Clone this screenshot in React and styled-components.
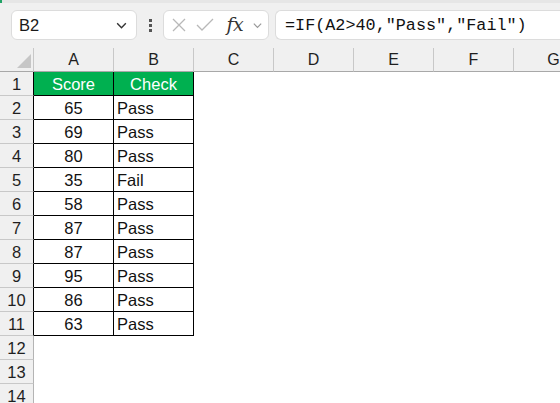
import React from "react";
import styled, { createGlobalStyle } from "styled-components";

const GlobalStyle = createGlobalStyle`
  html, body { margin: 0; padding: 0; background: #ffffff; }
  body { font-family: "Liberation Sans", Arial, sans-serif; overflow: hidden; }
`;

const rows = [
  [65, "Pass"], [69, "Pass"], [80, "Pass"], [35, "Fail"], [58, "Pass"],
  [87, "Pass"], [87, "Pass"], [95, "Pass"], [86, "Pass"], [63, "Pass"],
];
const cols = ["A", "B", "C", "D", "E", "F", "G"];

function Chevron({ size = 12, color = "#444" }) {
  return (
    <svg width={size} height={size} viewBox="0 0 12 12">
      <path d="M2 4 L6 8 L10 4" fill="none" stroke={color} strokeWidth="1.3" />
    </svg>
  );
}

export default function App() {
  return (
    <Page>
      <GlobalStyle />
      <TopStrip />
      <FormulaBar>
        <NameBox>
          <span>B2</span>
          <Chevron size={13} color="#333" />
        </NameBox>
        <Dots>
          <i /><i /><i />
        </Dots>
        <IconBox>
          <svg width="16" height="16" viewBox="0 0 16 16">
            <path d="M2 2 L14 14 M14 2 L2 14" stroke="#b8b8b8" strokeWidth="1.3" />
          </svg>
          <svg width="18" height="16" viewBox="0 0 18 16">
            <path d="M1 8 L6 13 L17 2" fill="none" stroke="#b8b8b8" strokeWidth="1.3" />
          </svg>
          <Fx>fx</Fx>
          <Chevron size={11} color="#999" />
        </IconBox>
        <FormulaInput>=IF(A2&gt;40,"Pass","Fail")</FormulaInput>
      </FormulaBar>
      <Sheet>
        <Corner>
          <svg width="14" height="14" viewBox="0 0 14 14">
            <path d="M14 0 L14 14 L0 14 Z" fill="#c6c6c6" />
          </svg>
        </Corner>
        {cols.map((c) => (
          <ColHead key={c}>{c}</ColHead>
        ))}

        <RowHead $dark>1</RowHead>
        <HeadCell>Score</HeadCell>
        <HeadCell>Check</HeadCell>
        <Empty />
        <Empty />
        <Empty />
        <Empty />
        <Empty />

        {rows.map(([score, check], i) => (
          <React.Fragment key={i}>
            <RowHead $dark>{i + 2}</RowHead>
            <Cell $center>{score}</Cell>
            <Cell>{check}</Cell>
            <Empty />
            <Empty />
            <Empty />
            <Empty />
            <Empty />
          </React.Fragment>
        ))}

        {[12, 13, 14].map((n) => (
          <React.Fragment key={n}>
            <RowHead>{n}</RowHead>
            <Empty /><Empty /><Empty /><Empty /><Empty /><Empty /><Empty />
          </React.Fragment>
        ))}
      </Sheet>
    </Page>
  );
}

const Page = styled.div`
  width: 560px;
  height: 403px;
  overflow: hidden;
  background: #ffffff;
`;

const TopStrip = styled.div`
  height: 3px;
  background: #e6e6e6;
  border-left: 2px solid #21a366;
`;

const FormulaBar = styled.div`
  height: 45px;
  background: #f0f0f0;
  display: flex;
  align-items: flex-start;
  padding: 7px 0 0 11px;
  box-sizing: border-box;
`;

const Box = styled.div`
  height: 30px;
  box-sizing: border-box;
  background: #ffffff;
  border: 1px solid #dcdcdc;
  border-radius: 6px;
  display: flex;
  align-items: center;
`;

const NameBox = styled(Box)`
  width: 126px;
  padding: 0 8px 0 7px;
  justify-content: space-between;
  font-size: 16.5px;
  color: #1a1a1a;
`;

const Dots = styled.div`
  width: 26px;
  height: 30px;
  display: flex;
  flex-direction: column;
  align-items: center;
  justify-content: center;
  gap: 2px;
  i {
    width: 3px;
    height: 3px;
    background: #555;
  }
`;

const IconBox = styled(Box)`
  width: 106px;
  padding: 0 5px 0 7px;
  justify-content: space-between;
`;

const Fx = styled.span`
  font-family: "DejaVu Serif", "Liberation Serif", serif;
  font-style: italic;
  font-size: 19px;
  color: #333;
  margin-left: 4px;
  margin-top: -2px;
  letter-spacing: -0.5px;
`;

const FormulaInput = styled(Box)`
  margin-left: 6px;
  flex: 1;
  border-right: none;
  border-radius: 6px 0 0 6px;
  padding-left: 9px;
  font-family: "Liberation Mono", "Courier New", monospace;
  font-size: 16.8px;
  color: #111;
  white-space: pre;
`;

const Sheet = styled.div`
  display: grid;
  grid-template-columns: 34px repeat(7, 80px);
  grid-auto-rows: 24px;
`;

const Corner = styled.div`
  background: #f0f0f0;
  border-right: 1px solid #c8c8c8;
  border-bottom: 1px solid #a8a8a8;
  display: flex;
  align-items: flex-end;
  justify-content: flex-end;
  padding: 0 2px 3px 0;
`;

const ColHead = styled.div`
  background: #f0f0f0;
  border-right: 1px solid #c8c8c8;
  border-bottom: 1px solid #a8a8a8;
  display: flex;
  align-items: center;
  justify-content: center;
  font-size: 16px;
  color: #1f1f1f;
  padding-top: 1px;
`;

const RowHead = styled.div`
  background: #f0f0f0;
  border-right: 1px solid ${(p) => (p.$dark ? "#000" : "#b4b4b4")};
  border-bottom: 1px solid #c8c8c8;
  display: flex;
  align-items: center;
  justify-content: center;
  font-size: 16.5px;
  color: #1f1f1f;
  padding-top: 1px;
`;

const HeadCell = styled.div`
  background: #00b050;
  color: #ffffff;
  border-right: 1px solid #000;
  border-bottom: 1px solid #000;
  display: flex;
  align-items: center;
  justify-content: center;
  font-size: 16.5px;
  padding-top: 1px;
`;

const Cell = styled.div`
  background: #ffffff;
  color: #111;
  border-right: 1px solid #000;
  border-bottom: 1px solid #000;
  display: flex;
  align-items: center;
  justify-content: ${(p) => (p.$center ? "center" : "flex-start")};
  padding-left: ${(p) => (p.$center ? "0" : "3px")};
  padding-top: 1px;
  font-size: 16.5px;
`;

const Empty = styled.div`
  background: #ffffff;
`;
